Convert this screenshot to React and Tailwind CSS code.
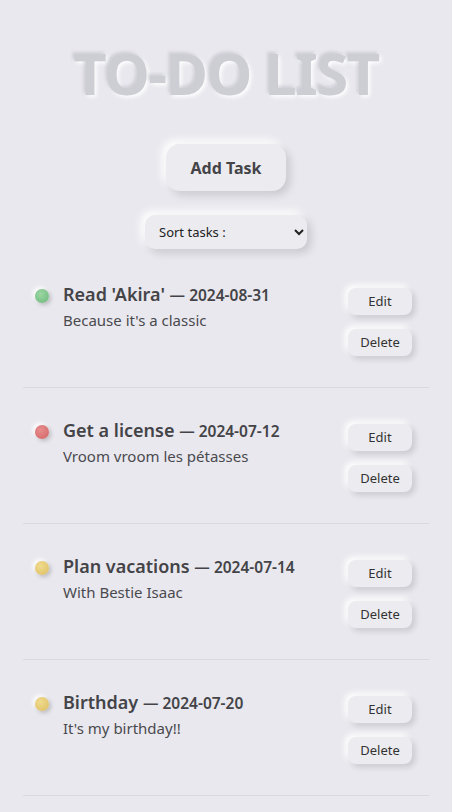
const tasks = [
  { id: 1, title: "Read 'Akira'", date: "2024-08-31", desc: "Because it's a classic", dot: "bg-[radial-gradient(circle_at_40%_35%,#9bd6a3,#6cb97a)]" },
  { id: 2, title: "Get a license", date: "2024-07-12", desc: "Vroom vroom les pétasses", dot: "bg-[radial-gradient(circle_at_40%_35%,#e88d8d,#d26464)]" },
  { id: 3, title: "Plan vacations", date: "2024-07-14", desc: "With Bestie Isaac", dot: "bg-[radial-gradient(circle_at_40%_35%,#f0da8e,#ddbf62)]" },
  { id: 4, title: "Birthday", date: "2024-07-20", desc: "It's my birthday!!", dot: "bg-[radial-gradient(circle_at_40%_35%,#f0da8e,#ddbf62)]" },
];

const App = () => {
  return (
    <div className="min-h-[812px] bg-[#e9e8ee] font-['Noto_Sans',sans-serif] text-[#444448]">
      <h1 className="pt-[37px] text-center text-[58px] leading-[72px] font-bold tracking-[-1.5px] text-[#cdcdd4] [text-shadow:-2px_-2px_3px_rgba(120,120,135,0.22),2px_2px_4px_#ffffff]">
        TO-DO LIST
      </h1>

      <div className="mt-[35px] flex justify-center">
        <button className="h-[47px] w-[120px] rounded-[14px] bg-[#ebebf0] text-[16px] font-bold text-[#444448] shadow-[4px_4px_8px_rgba(0,0,0,0.14),-4px_-4px_8px_#ffffff]">
          Add Task
        </button>
      </div>

      <div className="mt-[24px] flex justify-center">
        <select className="h-[34px] w-[162px] rounded-[10px] bg-[#ebebf0] px-[10px] text-[13px] text-[#222] outline-none shadow-[4px_4px_8px_rgba(0,0,0,0.14),-4px_-4px_8px_#ffffff]">
          <option>Sort tasks :</option>
          <option>By date</option>
          <option>By priority</option>
        </select>
      </div>

      <ul className="mx-[23px] mt-[3px]">
        {tasks.map((task) => (
          <li key={task.id} className="flex items-start justify-between border-b border-[#d9d9df] pt-[36px] pb-[31px] pl-[12px] pr-[17px]">
            <div className="flex items-start gap-[14px]">
              <span className={`mt-[1px] h-[14px] w-[14px] shrink-0 rounded-full ${task.dot} shadow-[2px_2px_4px_rgba(0,0,0,0.2),-2px_-2px_4px_#ffffff]`}></span>
              <div className="-mt-[7px]">
                <p className="text-[18px] leading-[26px] font-semibold text-[#444448]">
                  {task.title} <span className="text-[15.5px]">— {task.date}</span>
                </p>
                <p className="mt-[1px] text-[15px] leading-[22px] text-[#4a4a4e]">{task.desc}</p>
              </div>
            </div>
            <div className="flex flex-col gap-[14px]">
              <button className="h-[27px] w-[64px] rounded-[8px] bg-[#ebebf0] text-[13px] text-[#333] shadow-[3px_3px_6px_rgba(0,0,0,0.14),-3px_-3px_6px_#ffffff]">
                Edit
              </button>
              <button className="h-[27px] w-[64px] rounded-[8px] bg-[#ebebf0] text-[13px] text-[#333] shadow-[3px_3px_6px_rgba(0,0,0,0.14),-3px_-3px_6px_#ffffff]">
                Delete
              </button>
            </div>
          </li>
        ))}
      </ul>
    </div>
  );
};

export default App;
